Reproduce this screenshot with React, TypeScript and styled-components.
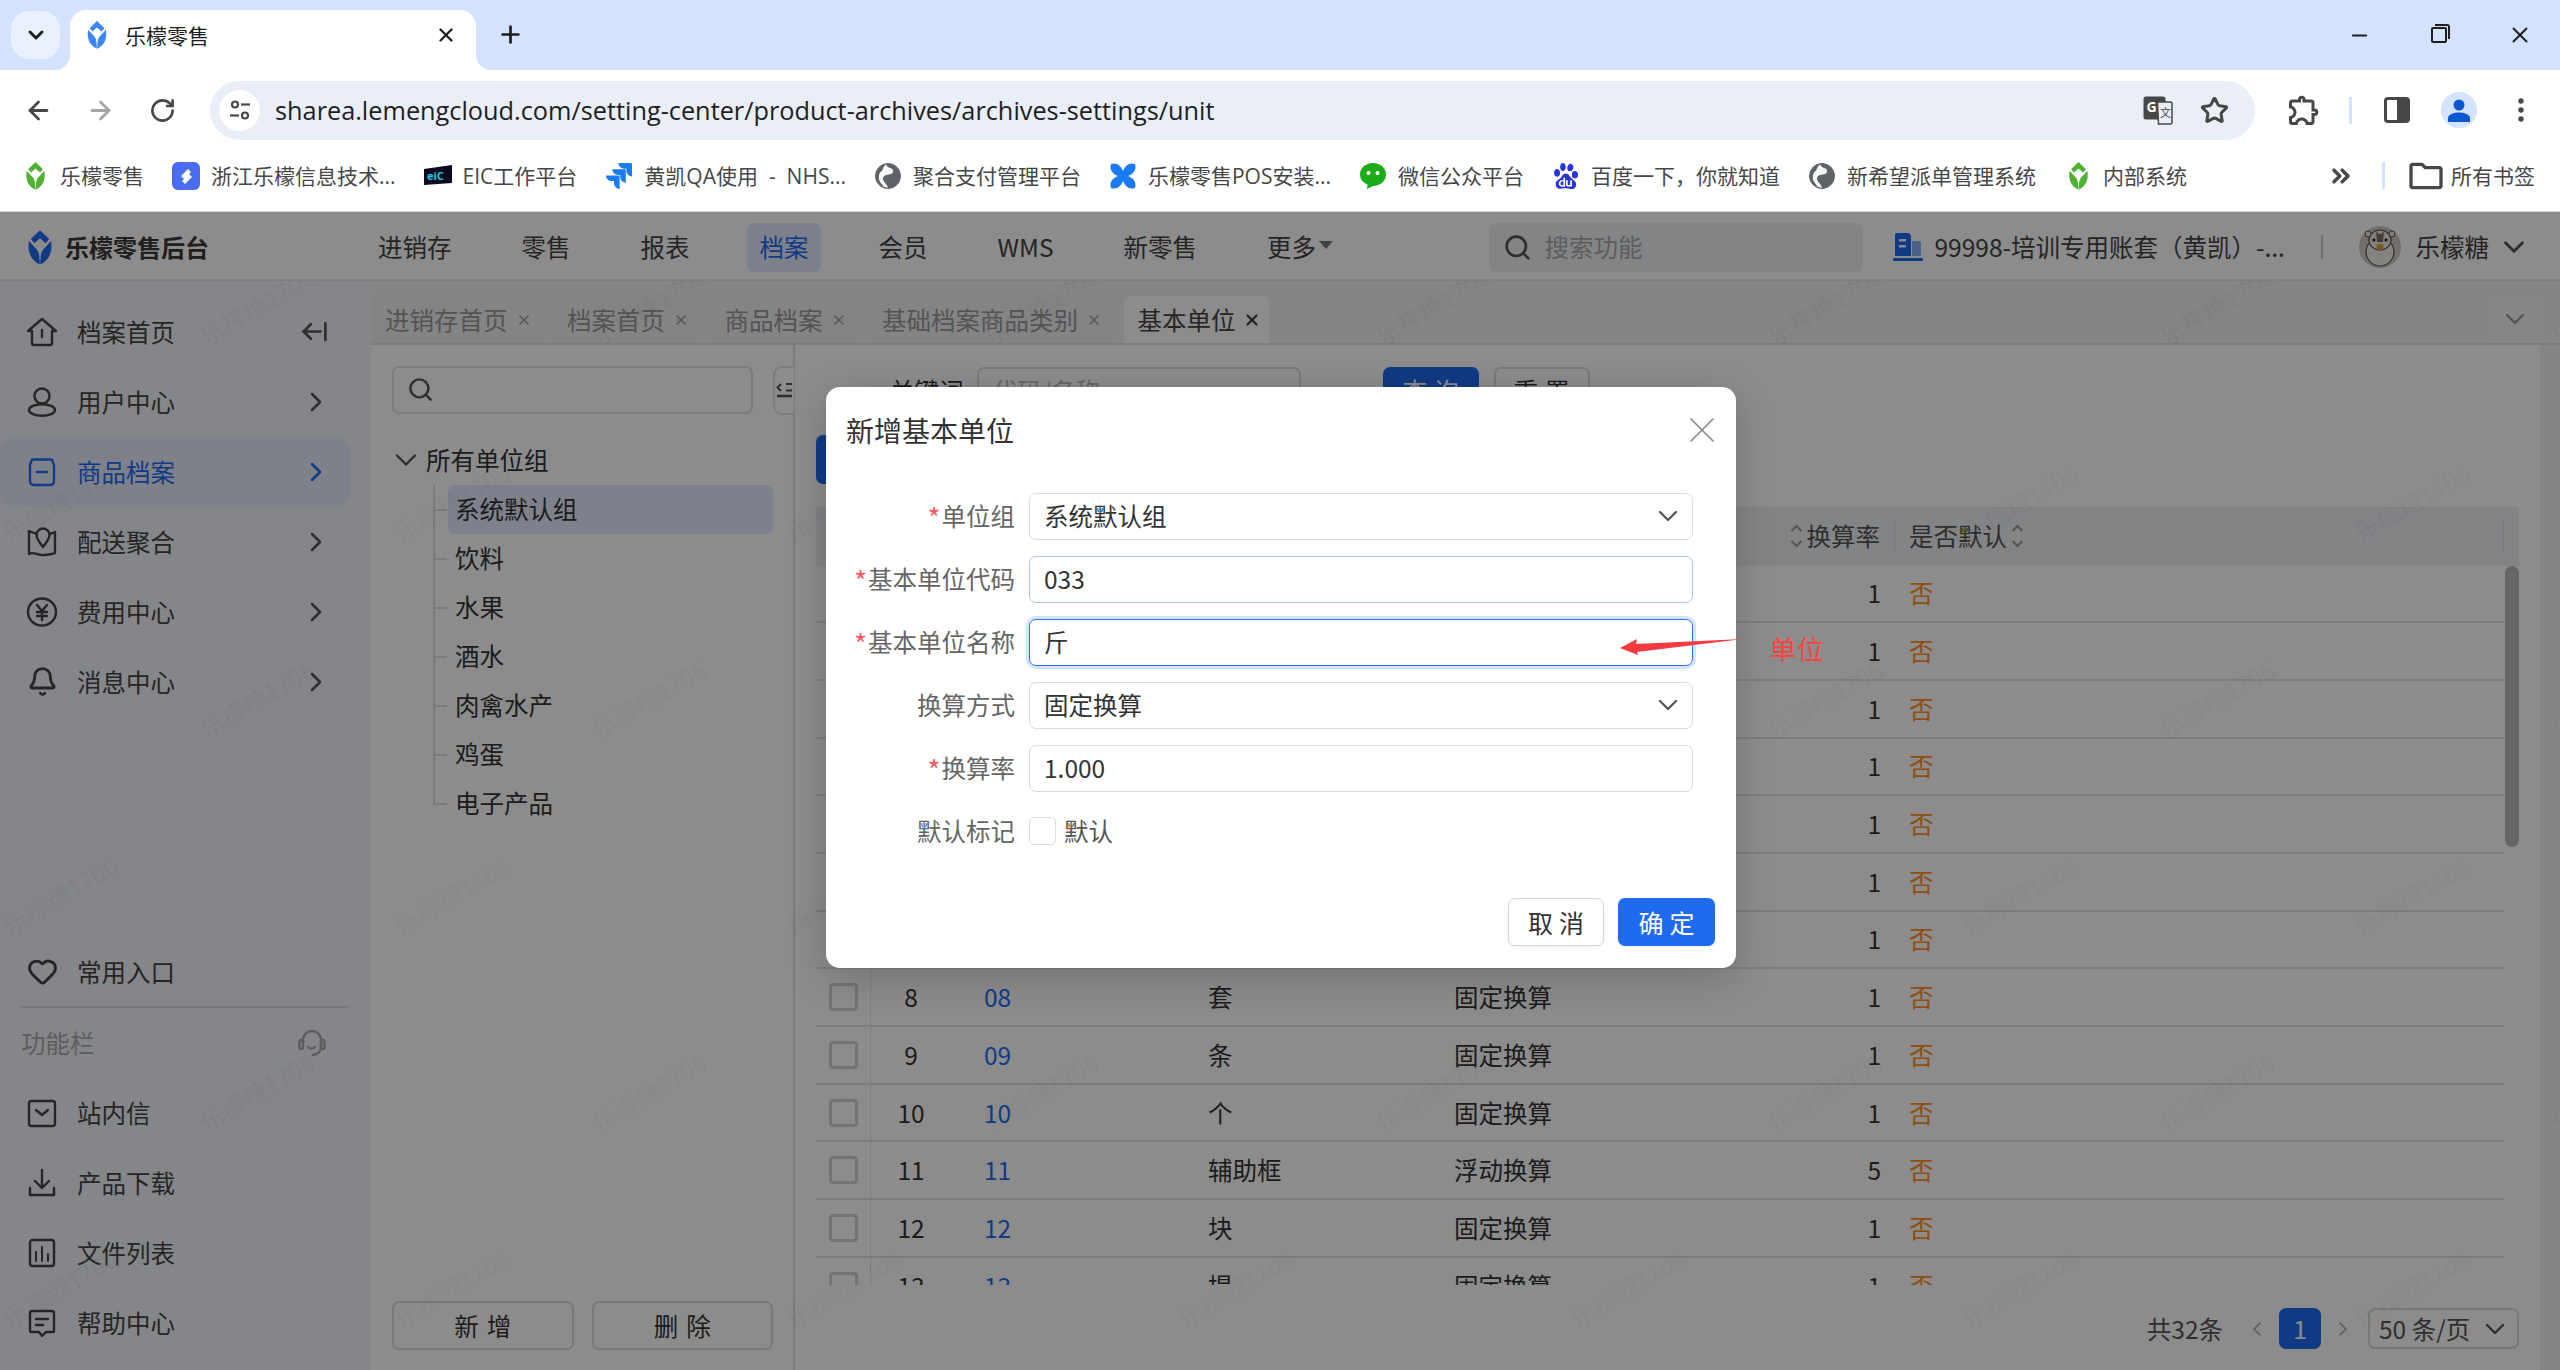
import styled, { createGlobalStyle } from 'styled-components'
import {
  ArrowLeft, ArrowLeftFromLine, ArrowRight, Bell, ChevronDown, ChevronLeft, ChevronRight, ChevronsRight,
  Heart, Minus, Plus, RotateCw, Search, Star, X,
} from 'lucide-react'
import { MdOutlineExtension, MdOutlineFolder } from 'react-icons/md'
import { SiBaidu, SiJira } from 'react-icons/si'
import type { ReactNode } from 'react'

const GlobalStyle = createGlobalStyle`
  html, body {
    margin: 0;
    padding: 0;
    overflow: hidden;
    background: #fff;
  }
  * {
    box-sizing: border-box;
  }
  body {
    font-family: "Noto Sans CJK SC", "Noto Sans", sans-serif;
    color: #333;
  }
`

const Screen = styled.div`
  width: 2560px;
  height: 1370px;
  display: flex;
  flex-direction: column;
  overflow: hidden;
`

/* ---------- browser chrome ---------- */

const TabStrip = styled.div`
  height: 70px;
  flex: none;
  display: flex;
  align-items: flex-end;
  background: #d3e3fd;
  color: #1f1f1f;
`

const TabListButton = styled.div`
  width: 49px;
  height: 48px;
  margin: 0 10px 11px 11px;
  border-radius: 18px;
  background: #e9f0fe;
  display: flex;
  align-items: center;
  justify-content: center;
`

const BrowserTab = styled.div`
  position: relative;
  width: 406px;
  height: 60px;
  padding: 0 19px 10px 16px;
  border-radius: 16px 16px 0 0;
  background: #fff;
  display: flex;
  align-items: center;
  font-size: 21px;
  line-height: 30px;

  &::before,
  &::after {
    content: '';
    position: absolute;
    bottom: 0;
    width: 16px;
    height: 16px;
  }
  &::before {
    left: -16px;
    background: radial-gradient(circle at 0 0, transparent 16px, #fff 16.5px);
  }
  &::after {
    right: -16px;
    background: radial-gradient(circle at 100% 0, transparent 16px, #fff 16.5px);
  }
`

const BrowserTabTitle = styled.span`
  margin-left: 17px;
  flex: 1;
`

const NewTab = styled.div`
  margin: 0 0 22px 21px;
  display: flex;
`

const WindowControls = styled.div`
  margin: 0 27px 22px auto;
  display: flex;
  align-items: center;
  gap: 60px;
`

const RestoreIcon = styled.span`
  position: relative;
  width: 16px;
  height: 16px;
  display: block;
  border: 2px solid #1f1f1f;
  border-radius: 2px;
  background: #d3e3fd;

  &::after {
    content: '';
    position: absolute;
    top: -5px;
    right: -5px;
    width: 13px;
    height: 13px;
    border-top: 2px solid #1f1f1f;
    border-right: 2px solid #1f1f1f;
    border-radius: 0 3px 0 0;
  }
`

const Toolbar = styled.div`
  height: 80px;
  flex: none;
  margin-top: -0.5px;
  padding: 11px 8px 0 7px;
  display: flex;
  align-items: flex-start;
  background: #fff;
  border-radius: 14px 14px 0 0;
  color: #474747;
`

const ToolButton = styled.div`
  width: 62px;
  height: 59px;
  flex: none;
  display: flex;
  align-items: center;
  justify-content: center;
`

const AddressBar = styled.div`
  flex: 1;
  height: 59px;
  margin: 0 18px 0 17px;
  padding: 0 26px 0 9px;
  display: flex;
  align-items: center;
  border-radius: 30px;
  background: #eaeef7;
`

const SiteInfo = styled.div`
  width: 41px;
  height: 41px;
  flex: none;
  border-radius: 50%;
  background: #fff;
  display: flex;
  align-items: center;
  justify-content: center;
`

const Url = styled.div`
  flex: 1;
  margin-left: 15px;
  font-family: "Open Sans", "Noto Sans", sans-serif;
  font-size: 25.3px;
  line-height: 34px;
  color: #1f1f1f;
  white-space: nowrap;
`

const AddressIcons = styled.div`
  display: flex;
  align-items: center;
  gap: 27px;
`

const ToolDivider = styled.div`
  width: 3px;
  height: 27px;
  margin: 16px 14px 0 14px;
  flex: none;
  background: #d3e3fd;
`

const ProfileBubble = styled.div`
  width: 36px;
  height: 36px;
  border-radius: 50%;
  background: #d3e3fd;
  display: flex;
  align-items: center;
  justify-content: center;
`

const Bookmarks = styled.div`
  height: 62px;
  flex: none;
  padding: 0 25px 9px 22px;
  display: flex;
  align-items: center;
  gap: 29px;
  background: #fff;
  border-bottom: 1px solid #d4d4d4;
  font-family: "Open Sans", "Noto Sans CJK SC", sans-serif;
  font-size: 21px;
  line-height: 30px;
  word-spacing: 5.5px;
  color: #474747;
`

const Bookmark = styled.div`
  display: flex;
  align-items: center;
  gap: 12px;
  white-space: nowrap;
`

const BookmarkIcon = styled.span`
  width: 26px;
  height: 28px;
  flex: none;
  display: flex;
  align-items: center;
  justify-content: center;

  svg {
    flex: none;
  }
`

const BookmarkTail = styled.div`
  margin-left: auto;
  display: flex;
  align-items: center;
`

const BookmarkDivider = styled.div`
  width: 3px;
  height: 27px;
  margin: 0 28px 0 27px;
  background: #d3e3fd;
`

/* ---------- app header ---------- */

const Page = styled.div`
  position: relative;
  flex: 1;
  min-height: 0;
  display: flex;
  flex-direction: column;
  background: #fff;
`

const AppHeader = styled.header`
  height: 69px;
  flex: none;
  padding: 4px 29px 0 0;
  display: flex;
  align-items: center;
  border-bottom: 2px solid #e6e6e6;
  background: #fff;
  font-size: 24.5px;
  line-height: 34px;
`

const Brand = styled.div`
  width: 365.5px;
  flex: none;
  padding-left: 27px;
  display: flex;
  align-items: center;
  gap: 12px;
`

const BrandName = styled.span`
  font-size: 24px;
  font-weight: 700;
  color: #3a3a3a;
`

const Nav = styled.nav`
  display: flex;
  align-items: center;
  gap: 45px;
`

const NavItem = styled.div<{ $active?: boolean }>`
  height: 49px;
  padding: 0 12.5px;
  display: flex;
  align-items: center;
  gap: 3px;
  border-radius: 7px;
  color: ${p => (p.$active ? '#1f6bf0' : '#444')};
  background: ${p => (p.$active ? '#e2eafb' : 'transparent')};
`

const Caret = styled.span`
  width: 0;
  height: 0;
  margin-top: -4px;
  border-left: 7px solid transparent;
  border-right: 7px solid transparent;
  border-top: 8px solid #777;
`

const HeaderSearch = styled.div`
  width: 374px;
  height: 49px;
  margin-left: auto;
  padding-left: 14px;
  display: flex;
  align-items: center;
  gap: 13px;
  border-radius: 7px;
  background: #eef0f5;
  color: #aaa;
`

const Account = styled.div`
  margin-left: 30px;
  display: flex;
  align-items: center;
  gap: 12px;
  color: #444;
  white-space: nowrap;
`

const AccountName = styled.span`
  width: 347px;
`

const HeaderDivider = styled.div`
  width: 2px;
  height: 24px;
  margin: 0 36px 0 39px;
  background: #ccc;
`

const UserName = styled.span`
  margin: 0 8px 0 15px;
  color: #444;
`

/* ---------- sidebar ---------- */

const Body = styled.div`
  flex: 1;
  min-height: 0;
  display: flex;
`

const Sidebar = styled.aside`
  width: 371px;
  flex: none;
  padding: 16px 22px 12px 0;
  display: flex;
  flex-direction: column;
  background: #f2f4fa;
`

const SideRow = styled.div<{ $active?: boolean; $short?: boolean }>`
  height: ${p => (p.$short ? 69 : 70)}px;
  flex: none;
  padding: 0 17px 0 26px;
  display: flex;
  align-items: center;
  border-radius: 14px;
  font-size: 24.5px;
  line-height: 34px;
  color: ${p => (p.$active ? '#1f6bf0' : '#444')};
  background: ${p => (p.$active ? '#e6ecfa' : 'transparent')};
`

const SideIcon = styled.span`
  width: 32px;
  height: 32px;
  flex: none;
  margin-right: 19px;
  display: flex;
  align-items: center;
  justify-content: center;
`

const SideLabel = styled.span`
  flex: 1;
`

const CollapseArrow = styled.span`
  margin-right: 3px;
  display: flex;
`

const SideBottom = styled.div`
  margin-top: auto;
  display: flex;
  flex-direction: column;
`

const SideDivider = styled.div`
  height: 2px;
  margin-left: 21px;
  background: #dcdde3;
`

const SideSection = styled.div`
  height: 70px;
  padding: 0 22px 0 21px;
  display: flex;
  align-items: center;
  justify-content: space-between;
  font-size: 24.5px;
  line-height: 34px;
  color: #aaa;
`

/* ---------- work area ---------- */

const Main = styled.main`
  flex: 1;
  min-width: 0;
  display: flex;
  flex-direction: column;
  background: #f2f2f5;
`

const TabsBar = styled.div`
  height: 64px;
  flex: none;
  padding-top: 15px;
  display: flex;
  align-items: stretch;
  gap: 10.5px;
  border-bottom: 2px solid #e2e2e5;
`

const PageTab = styled.div<{ $active?: boolean }>`
  padding: 2px ${p => (p.$active ? 8 : 11)}px 0 14px;
  display: flex;
  align-items: center;
  gap: ${p => (p.$active ? 7 : 8)}px;
  border-radius: 7px 7px 0 0;
  font-size: 24.5px;
  line-height: 34px;
  color: ${p => (p.$active ? '#444' : '#999')};
  background: ${p => (p.$active ? '#fff' : '#f0f0f3')};
`

const TabsMore = styled.div`
  width: 50px;
  margin: 0 20px 0 auto;
  display: flex;
  align-items: center;
  justify-content: center;
  background: #f5f5f8;
  color: #999;
`

const Content = styled.div`
  flex: 1;
  min-height: 0;
  margin-right: 20px;
  display: flex;
  background: #fff;
`

const TreePanel = styled.section`
  position: relative;
  width: 424px;
  flex: none;
  padding: 21px 20px 20px 21px;
  display: flex;
  flex-direction: column;
  border-right: 2px solid #dfdfdf;
`

const TreeSearch = styled.div`
  width: 361px;
  height: 48px;
  flex: none;
  padding-left: 13px;
  display: flex;
  align-items: center;
  border: 2px solid #e2e2e2;
  border-radius: 7px;
`

const CollapseTab = styled.div`
  position: absolute;
  top: 21px;
  right: -1px;
  width: 21px;
  height: 49px;
  display: flex;
  align-items: center;
  justify-content: center;
  border: 2px solid #e2e2e2;
  border-right: 0;
  border-radius: 9px 0 0 9px;
  background: #fff;
`

const TreeRoot = styled.div`
  height: 49px;
  margin: 22px 0 0 -4px;
  flex: none;
  display: flex;
  align-items: center;
  gap: 2px;
  font-size: 24.5px;
  line-height: 34px;
  color: #333;
`

const TreeChildren = styled.div`
  padding-left: 56px;
  display: flex;
  flex-direction: column;
`

const TreeNode = styled.div<{ $selected?: boolean; $last?: boolean }>`
  position: relative;
  height: 49px;
  padding-left: 7px;
  display: flex;
  align-items: center;
  border-radius: 7px;
  font-size: 24.5px;
  line-height: 34px;
  color: #333;
  background: ${p => (p.$selected ? '#e5ecff' : 'transparent')};

  &::before {
    content: '';
    position: absolute;
    left: -15px;
    top: 0;
    height: ${p => (p.$last ? '50%' : '100%')};
    border-left: 2px solid #e0e0e0;
  }
  &::after {
    content: '';
    position: absolute;
    left: -15px;
    top: 50%;
    width: 14px;
    border-top: 2px solid #e0e0e0;
  }
`

const TreeActions = styled.div`
  margin-top: auto;
  display: flex;
  gap: 18px;
`

const OutlineButton = styled.div`
  width: 182px;
  height: 49px;
  display: flex;
  align-items: center;
  justify-content: center;
  border: 2px solid #dcdcdc;
  border-radius: 7px;
  background: #fff;
  font-size: 24.5px;
  line-height: 34px;
  letter-spacing: 8px;
  text-indent: 8px;
  color: #333;
`

const ListPanel = styled.section`
  flex: 1;
  min-width: 0;
  padding: 22px 21px 21px 21px;
  display: flex;
  flex-direction: column;
`

const QueryRow = styled.div`
  height: 48px;
  flex: none;
  padding-left: 74px;
  display: flex;
  align-items: center;
  font-size: 24.5px;
  line-height: 34px;
`

const QueryInput = styled.div`
  width: 324px;
  height: 48px;
  margin: 0 82px 0 13px;
  padding-left: 14px;
  display: flex;
  align-items: center;
  border: 2px solid #dedede;
  border-radius: 7px;
  color: #bbb;
`

const QueryButton = styled.div<{ $primary?: boolean }>`
  width: 96px;
  height: 48px;
  margin-right: 15px;
  display: flex;
  align-items: center;
  justify-content: center;
  border-radius: 7px;
  letter-spacing: 7px;
  text-indent: 7px;
  color: ${p => (p.$primary ? '#fff' : '#333')};
  background: ${p => (p.$primary ? '#1f6bf0' : '#fff')};
  border: ${p => (p.$primary ? '0' : '2px solid #dcdcdc')};
`

const ActionRow = styled.div`
  height: 49px;
  margin: 20px 0 23px;
  flex: none;
  display: flex;
`

const PrimaryButton = styled.div`
  width: 96px;
  height: 49px;
  display: flex;
  align-items: center;
  justify-content: center;
  border-radius: 7px;
  background: #1f6bf0;
  color: #fff;
  font-size: 24.5px;
  line-height: 34px;
  letter-spacing: 7px;
  text-indent: 7px;
`

const TableWrap = styled.div`
  position: relative;
  flex: 1;
  min-height: 0;
  display: flex;
  flex-direction: column;
`

const columns = '55px 80px 245px 246px 260px 193px 1fr'

const TableHead = styled.div`
  height: 59px;
  flex: none;
  display: grid;
  grid-template-columns: ${columns} 15px;
  align-items: center;
  background: #eef0f5;
  font-size: 24.5px;
  line-height: 34px;
  color: #555;
`

const HeadCell = styled.div<{ $align?: string; $divide?: boolean }>`
  height: 33px;
  padding: 0 14px;
  display: flex;
  align-items: center;
  justify-content: ${p => p.$align || 'flex-start'};
  gap: 4px;
  border-right: ${p => (p.$divide ? '1px solid #dcdee4' : '0')};
`

const TableBody = styled.div`
  flex: 1;
  min-height: 0;
  padding-right: 15px;
  overflow: hidden;
`

const TableRow = styled.div`
  height: 57.7px;
  display: grid;
  grid-template-columns: ${columns};
  align-items: center;
  border-bottom: 2px solid #e3e3e3;
  font-size: 24.5px;
  line-height: 34px;
  color: #333;
`

const CheckCell = styled.div`
  height: 100%;
  display: flex;
  align-items: center;
  padding-left: 13px;
  border-right: 1px solid #e6e6e6;
`

const RowCheck = styled.span`
  width: 29px;
  height: 28px;
  border: 3px solid #d4d4d4;
  border-radius: 4px;
  background: #fff;
`

const IndexCell = styled.div`
  text-align: center;
`

const CodeCell = styled.div`
  padding-left: 33px;
  color: #1f6bf0;
`

const TextCell = styled.div`
  padding-left: 12px;
  white-space: nowrap;
`

const RateCell = styled.div`
  padding-right: 14px;
  text-align: right;
`

const FlagCell = styled.div`
  padding-left: 14px;
  color: #ff8f1f;
`

const Scrollbar = styled.div`
  position: absolute;
  top: 59px;
  right: 0;
  width: 14px;
  height: 281px;
  border-radius: 7px;
  background: #bbb;
`

const Pager = styled.div`
  height: 41px;
  margin-top: 23px;
  flex: none;
  display: flex;
  align-items: center;
  justify-content: flex-end;
  font-size: 24.5px;
  line-height: 34px;
  color: #555;
`

const PagerTotal = styled.span`
  margin-right: 22px;
`

const PagerArrow = styled.span`
  width: 24px;
  display: flex;
  justify-content: center;
  color: #aaa;
`

const PagerCurrent = styled.div`
  width: 42px;
  height: 41px;
  margin: 0 10px;
  display: flex;
  align-items: center;
  justify-content: center;
  border-radius: 7px;
  background: #1f6bf0;
  color: #fff;
`

const PagerSize = styled.div`
  width: 151px;
  height: 41px;
  margin-left: 13px;
  padding: 0 6px 0 9px;
  display: flex;
  align-items: center;
  justify-content: space-between;
  border: 2px solid #d9d9d9;
  border-radius: 7px;
  white-space: nowrap;
`

/* ---------- overlays ---------- */

const WatermarkLayer = styled.div`
  position: absolute;
  inset: 69px 0 0 0;
  overflow: hidden;
  pointer-events: none;
`

const WatermarkText = styled.span`
  position: absolute;
  transform: translate(-50%, -50%) rotate(-30deg);
  font-size: 24.5px;
  line-height: 34px;
  white-space: nowrap;
  color: rgba(0, 0, 0, 0.05);
`

const Mask = styled.div`
  position: absolute;
  inset: 0;
  background: rgba(0, 0, 0, 0.45);
`

const Dialog = styled.div`
  position: absolute;
  left: 826px;
  top: 175px;
  width: 910px;
  height: 581px;
  display: flex;
  flex-direction: column;
  border-radius: 14px;
  background: #fff;
  box-shadow: 0 10px 40px rgba(0, 0, 0, 0.18);
`

const DialogHeader = styled.div`
  height: 86px;
  flex: none;
  padding: 0 12px 0 20px;
  display: flex;
  align-items: center;
  justify-content: space-between;
  font-size: 28px;
  line-height: 40px;
  color: #333;
`

const Form = styled.div`
  margin-top: 20px;
  padding-right: 43px;
  display: grid;
  grid-template-columns: 189px 1fr;
  grid-auto-rows: 47px;
  column-gap: 14px;
  row-gap: 16px;
  align-items: center;
  font-size: 24.5px;
  line-height: 34px;
`

const FieldLabel = styled.div`
  text-align: right;
  color: #666;
  white-space: nowrap;
`

const Required = styled.span`
  margin-right: 1px;
  font-size: 28px;
  line-height: 24px;
  vertical-align: -3px;
  color: #ff5a5f;
`

const Field = styled.div<{ $state?: 'hover' | 'focus' }>`
  height: 47px;
  padding: 0 8px 0 14px;
  display: flex;
  align-items: center;
  justify-content: space-between;
  border-radius: 7px;
  color: #333;
  border: ${p => (p.$state === 'focus' ? '1.5px solid #2a72f0' : p.$state === 'hover' ? '1.5px solid #a9c6f5' : '1.5px solid #dcdcdc')};
  box-shadow: ${p => (p.$state === 'focus' ? '0 0 0 3px #d5e3fc' : 'none')};
`

const CheckField = styled.div`
  display: flex;
  align-items: center;
  gap: 8px;
  color: #555;
`

const CheckBox = styled.span`
  width: 27px;
  height: 28px;
  border: 1.5px solid #dcdcdc;
  border-radius: 5px;
`

const DialogFooter = styled.div`
  margin-top: auto;
  padding: 0 21px 22px 0;
  display: flex;
  justify-content: flex-end;
  gap: 14px;
`

const DialogButton = styled.div<{ $primary?: boolean }>`
  width: ${p => (p.$primary ? 97 : 96)}px;
  height: 48px;
  display: flex;
  align-items: center;
  justify-content: center;
  border-radius: 7px;
  font-size: 25px;
  line-height: 34px;
  letter-spacing: 6px;
  text-indent: 6px;
  color: ${p => (p.$primary ? '#fff' : '#333')};
  background: ${p => (p.$primary ? '#1f6bf0' : '#fff')};
  border: ${p => (p.$primary ? '0' : '1.5px solid #d5d5d5')};
  box-shadow: 0 2px 3px rgba(0, 0, 0, 0.05);
`

const ArrowMark = styled.svg`
  position: absolute;
  left: 1615px;
  top: 420px;
`

const MarkLabel = styled.div`
  position: absolute;
  left: 1769px;
  top: 416px;
  font-size: 27.5px;
  line-height: 40px;
  color: #ff4242;
`

/* ---------- drawings ---------- */

const LemonLogo = ({ color, w = 24, h = 32 }: { color: string; w?: number; h?: number }) => (
  <svg width={w} height={h} viewBox="0 0 24 32" fill={color}>
    <path d="M12 0 L20.5 8.2 L17.2 12 L12 7.4 L6.8 12 L3.5 8.2 Z" />
    <path d="M1.8 10 L9 17.8 C11.2 20.5 11.6 24 11.8 31.6 C5 28.6 0 22 1.8 10 Z" />
    <path d="M22.2 10 L15 17.8 C12.8 20.5 12.4 24 12.2 31.6 C19 28.6 24 22 22.2 10 Z" />
  </svg>
)

const SiteTuneIcon = () => (
  <svg width="24" height="24" viewBox="0 0 24 24" fill="none" stroke="#474747" strokeWidth="2.2">
    <circle cx="7" cy="6.5" r="3" />
    <path d="M13 6.5 H22" />
    <circle cx="17" cy="17.5" r="3" />
    <path d="M2 17.5 H11" />
  </svg>
)

const TranslateIcon = () => (
  <svg width="30" height="29" viewBox="0 0 30 29">
    <rect x="0.5" y="0.5" width="22" height="23" rx="2.5" fill="#474747" />
    <text x="3.5" y="16" fontSize="14" fontWeight="700" fontFamily="Open Sans, sans-serif" fill="#fff">G</text>
    <path d="M14.5 6 H27.5 A1.5 1.5 0 0 1 29 7.5 V26.5 A1.5 1.5 0 0 1 27.5 28 H15.5 Z" fill="#eaeef7" stroke="#474747" strokeWidth="1.5" />
    <text x="17" y="21" fontSize="11" fontFamily="Noto Sans CJK SC, sans-serif" fill="#474747">文</text>
  </svg>
)

const SidePanelIcon = () => (
  <svg width="26" height="26" viewBox="0 0 26 26">
    <rect x="1.5" y="1.5" width="23" height="23" rx="2.5" fill="none" stroke="#474747" strokeWidth="3" />
    <rect x="13" y="2" width="11" height="22" fill="#474747" />
  </svg>
)

const ProfileIcon = () => (
  <svg width="26" height="26" viewBox="0 0 26 26" fill="#0b57d0">
    <circle cx="13" cy="8" r="5.5" />
    <path d="M2 25 V21 C2 17.5 8 15.5 13 15.5 C18 15.5 24 17.5 24 21 V25 Z" />
  </svg>
)

const KebabIcon = () => (
  <svg width="8" height="26" viewBox="0 0 8 26" fill="#474747">
    <circle cx="4" cy="4" r="2.7" />
    <circle cx="4" cy="13" r="2.7" />
    <circle cx="4" cy="22" r="2.7" />
  </svg>
)

const TeamIcon = () => (
  <svg width="28" height="28" viewBox="0 0 28 28">
    <rect width="28" height="28" rx="6" fill="#4a6cf0" />
    <path d="M9 14 L16 7 L19 10 L12 17 Z M10 19 L17 12 L20 15 L13 22 Z" fill="#fff" />
  </svg>
)

const EicIcon = () => (
  <svg width="28" height="24" viewBox="0 0 28 24">
    <path d="M0 5 L28 1 V19 L0 21 Z" fill="#0a0a1e" />
    <text x="3" y="16" fontSize="11" fontWeight="700" fontFamily="Open Sans, sans-serif" fill="#27c4e8">eiC</text>
  </svg>
)

const GlobeIcon = () => (
  <svg width="26" height="26" viewBox="0 0 26 26">
    <circle cx="13" cy="13" r="12.5" fill="#5f6368" />
    <path d="M11 1 C12 6 19 4 18 9 C17 13 9 10 8 15 C7.5 19 12 20 13 25 L9 24 C6 20 3 18 4 12 C5 8 8 8 8 5 Z" fill="#fff" opacity="0.95" />
    <circle cx="13" cy="13" r="12.5" fill="none" stroke="#5f6368" strokeWidth="1" />
  </svg>
)

const ButterflyIcon = () => (
  <svg width="28" height="28" viewBox="0 0 28 28" fill="#1a7bf2">
    <path d="M2 2 C8 0 12 4 14 9 C16 4 20 0 26 2 C28 8 24 12 19 14 C24 16 28 20 26 26 C20 28 16 24 14 19 C12 24 8 28 2 26 C0 20 4 16 9 14 C4 12 0 8 2 2 Z" />
  </svg>
)

const WechatIcon = () => (
  <svg width="28" height="28" viewBox="0 0 28 28">
    <path d="M14 1 C21.5 1 27 6 27 12.5 C27 19 21.5 24 14 24 L8 27 L8.5 22.5 C4 20.5 1 17 1 12.5 C1 6 6.5 1 14 1 Z" fill="#1aad19" />
    <circle cx="9.5" cy="11" r="2" fill="#fff" />
    <circle cx="18.5" cy="11" r="2" fill="#fff" />
  </svg>
)

const BuildingIcon = () => (
  <svg width="30" height="28" viewBox="0 0 30 28">
    <path d="M2 2 Q2 0 4 0 H14 Q18 0 18 4 V23 H2 Z" fill="#1f6bf0" />
    <rect x="6" y="6" width="7" height="2.5" fill="#fff" />
    <rect x="6" y="12" width="7" height="2.5" fill="#fff" />
    <path d="M19 8 H26 Q28 8 28 10 V23 H19 Z" fill="#8aaef2" />
    <rect x="0" y="25" width="30" height="3" rx="1" fill="#1f6bf0" />
  </svg>
)

const HamsterAvatar = () => (
  <svg width="42" height="42" viewBox="0 0 42 42">
    <circle cx="21" cy="21" r="21" fill="#cfc9c4" />
    <ellipse cx="21" cy="26" rx="14" ry="14" fill="#f3efe9" stroke="#555" strokeWidth="1.2" />
    <ellipse cx="21" cy="14" rx="11" ry="10" fill="#efe9e2" stroke="#555" strokeWidth="1.2" />
    <path d="M17 5 C19 9 23 9 25 5 L24 16 H18 Z" fill="#7d6f62" />
    <circle cx="9" cy="8" r="3" fill="#efe9e2" stroke="#555" />
    <circle cx="33" cy="8" r="3" fill="#efe9e2" stroke="#555" />
    <circle cx="15" cy="14" r="1.6" fill="#222" />
    <circle cx="27" cy="14" r="1.6" fill="#222" />
    <rect x="17.5" y="18" width="7" height="6" rx="2" fill="#d9a441" />
  </svg>
)

const navIconProps = {
  width: 32,
  height: 30,
  viewBox: '0 0 32 30',
  fill: 'none',
  stroke: 'currentColor',
  strokeWidth: 2.4,
  strokeLinejoin: 'round' as const,
  strokeLinecap: 'round' as const,
}

const HomeIcon = () => (
  <svg {...navIconProps}>
    <path d="M16 2 L30 14 H26 V26 Q26 28 24 28 H8 Q6 28 6 26 V14 H2 Z" />
    <path d="M16 13 V20" />
  </svg>
)

const UserIcon = () => (
  <svg {...navIconProps}>
    <ellipse cx="16" cy="9" rx="7.5" ry="7.5" />
    <ellipse cx="16" cy="23" rx="13" ry="5.8" />
  </svg>
)

const ArchiveIcon = () => (
  <svg {...navIconProps}>
    <path d="M6 2.5 H26 L28 8 V24 Q28 28 24 28 H8 Q4 28 4 24 V8 Z" />
    <path d="M11 15 H21" />
  </svg>
)

const MapIcon = () => (
  <svg {...navIconProps}>
    <path d="M11 7 L3 4 V27 C8 24 12 29 18 28 C22 27 26 28 29 26 V5 L24 7" />
    <path d="M17 20 C13 15 10.5 12 10.5 8 A6.5 6.5 0 0 1 23.5 8 C23.5 12 21 15 17 20 Z" />
  </svg>
)

const YenIcon = () => (
  <svg {...navIconProps}>
    <ellipse cx="16" cy="15" rx="14" ry="13.5" />
    <path d="M11 8 L16 14 L21 8 M11 15 H21 M11 19 H21 M16 14 V23" />
  </svg>
)

const InboxIcon = () => (
  <svg {...navIconProps}>
    <rect x="3" y="3" width="26" height="25" rx="2.5" />
    <path d="M10 12 L16 17 L22 12" />
  </svg>
)

const DownloadIcon = () => (
  <svg {...navIconProps}>
    <path d="M16 2 V20 M9 13 L16 20 L23 13 M4 20 V27 H28 V20" />
  </svg>
)

const ReportIcon = () => (
  <svg {...navIconProps}>
    <rect x="4" y="2" width="24" height="26" rx="2.5" />
    <path d="M10 14 V23 M16 9 V23 M22 16 V23" strokeWidth="2" />
  </svg>
)

const HelpIcon = () => (
  <svg {...navIconProps}>
    <path d="M4 5 Q4 3 6 3 H26 Q28 3 28 5 V23 Q28 24 26 24 H20 L16 28 L13 24 H6 Q4 24 4 23 Z" />
    <path d="M10 11 H22 M10 17 H17" />
  </svg>
)

const HeadsetIcon = () => (
  <svg width="30" height="30" viewBox="0 0 30 30" fill="none" stroke="#aaa" strokeWidth="2.4" strokeLinecap="round">
    <path d="M6 14 V12 A9 9 0 0 1 24 12 V19 C24 23 21 26 16 27" />
    <rect x="2.5" y="12" width="3.5" height="9" rx="1.5" />
    <rect x="24" y="12" width="3.5" height="9" rx="1.5" />
    <path d="M11 19 C13 21 16 21 18 19" />
  </svg>
)

const ListCollapseIcon = () => (
  <svg width="18" height="18" viewBox="0 0 18 18" fill="none" stroke="#555" strokeWidth="2">
    <path d="M5 3 L1.5 6.5 L5 10" />
    <path d="M10 3 H16 M10 9.5 H16" />
    <path d="M1 15 H16" strokeWidth="2.6" />
  </svg>
)

const SortIcon = () => (
  <svg width="13" height="24" viewBox="0 0 13 24" fill="none" stroke="#999" strokeWidth="2">
    <path d="M1.5 7 L6.5 2 L11.5 7 M1.5 17 L6.5 22 L11.5 17" />
  </svg>
)

/* ---------- data ---------- */

const bookmarks: { icon: ReactNode; label: string }[] = [
  { icon: <LemonLogo color="#4fb233" w={21} h={28} />, label: '乐檬零售' },
  { icon: <TeamIcon />, label: '浙江乐檬信息技术...' },
  { icon: <EicIcon />, label: 'EIC工作平台' },
  { icon: <SiJira size={26} color="#1a7bf2" />, label: '黄凯QA使用 - NHS...' },
  { icon: <GlobeIcon />, label: '聚合支付管理平台' },
  { icon: <ButterflyIcon />, label: '乐檬零售POS安装...' },
  { icon: <WechatIcon />, label: '微信公众平台' },
  { icon: <SiBaidu size={26} color="#2932e1" />, label: '百度一下，你就知道' },
  { icon: <GlobeIcon />, label: '新希望派单管理系统' },
  { icon: <LemonLogo color="#4fb233" w={21} h={28} />, label: '内部系统' },
]

const navItems = ['进销存', '零售', '报表', '档案', '会员', 'WMS', '新零售']

const sideMain: { icon: ReactNode; label: string }[] = [
  { icon: <UserIcon />, label: '用户中心' },
  { icon: <ArchiveIcon />, label: '商品档案' },
  { icon: <MapIcon />, label: '配送聚合' },
  { icon: <YenIcon />, label: '费用中心' },
  { icon: <Bell size={31} strokeWidth={2.2} />, label: '消息中心' },
]

const sideTools: { icon: ReactNode; label: string }[] = [
  { icon: <InboxIcon />, label: '站内信' },
  { icon: <DownloadIcon />, label: '产品下载' },
  { icon: <ReportIcon />, label: '文件列表' },
  { icon: <HelpIcon />, label: '帮助中心' },
]

const pageTabs = ['进销存首页', '档案首页', '商品档案', '基础档案商品类别', '基本单位']

const treeNodes = ['系统默认组', '饮料', '水果', '酒水', '肉禽水产', '鸡蛋', '电子产品']

const rows = [
  ['1', '01', '件', '固定换算', '1'],
  ['2', '02', '箱', '固定换算', '1'],
  ['3', '03', '瓶', '固定换算', '1'],
  ['4', '04', '包', '固定换算', '1'],
  ['5', '05', '袋', '固定换算', '1'],
  ['6', '06', '盒', '固定换算', '1'],
  ['7', '07', '只', '固定换算', '1'],
  ['8', '08', '套', '固定换算', '1'],
  ['9', '09', '条', '固定换算', '1'],
  ['10', '10', '个', '固定换算', '1'],
  ['11', '11', '辅助框', '浮动换算', '5'],
  ['12', '12', '块', '固定换算', '1'],
  ['13', '13', '提', '固定换算', '1'],
]

// staggered like the site's tiled watermark
const watermarks = Array.from({ length: 6 }, (_, row) =>
  Array.from({ length: 7 }, (_, col) => ({
    x: (row % 2 === 0 ? 257 : 60) + col * 392,
    y: 306 + row * 196.5 - 281,
  })),
).flat()

const App = () => {
  return (
    <Screen>
      <GlobalStyle />

      <TabStrip>
        <TabListButton>
          <ChevronDown size={24} strokeWidth={3} />
        </TabListButton>
        <BrowserTab>
          <LemonLogo color="#3b86f6" w={22} h={28} />
          <BrowserTabTitle>乐檬零售</BrowserTabTitle>
          <X size={22} strokeWidth={2.6} />
        </BrowserTab>
        <NewTab>
          <Plus size={27} strokeWidth={2.4} />
        </NewTab>
        <WindowControls>
          <Minus size={23} strokeWidth={2} />
          <RestoreIcon />
          <X size={26} strokeWidth={1.8} />
        </WindowControls>
      </TabStrip>

      <Toolbar>
        <ToolButton><ArrowLeft size={29} strokeWidth={2.3} /></ToolButton>
        <ToolButton><ArrowRight size={29} strokeWidth={2.3} color="#a5a5a5" /></ToolButton>
        <ToolButton><RotateCw size={27} strokeWidth={2.3} /></ToolButton>
        <AddressBar>
          <SiteInfo><SiteTuneIcon /></SiteInfo>
          <Url>sharea.lemengcloud.com/setting-center/product-archives/archives-settings/unit</Url>
          <AddressIcons>
            <TranslateIcon />
            <Star size={29} strokeWidth={2.5} />
          </AddressIcons>
        </AddressBar>
        <ToolButton><MdOutlineExtension size={36} /></ToolButton>
        <ToolDivider />
        <ToolButton><SidePanelIcon /></ToolButton>
        <ToolButton><ProfileBubble><ProfileIcon /></ProfileBubble></ToolButton>
        <ToolButton><KebabIcon /></ToolButton>
      </Toolbar>

      <Bookmarks>
        {bookmarks.map(b => (
          <Bookmark key={b.label}>
            <BookmarkIcon>{b.icon}</BookmarkIcon>
            {b.label}
          </Bookmark>
        ))}
        <BookmarkTail>
          <ChevronsRight size={28} strokeWidth={3} />
          <BookmarkDivider />
          <Bookmark>
            <BookmarkIcon><MdOutlineFolder size={40} /></BookmarkIcon>
            所有书签
          </Bookmark>
        </BookmarkTail>
      </Bookmarks>

      <Page>
        <AppHeader>
          <Brand>
            <LemonLogo color="#1f6bf0" w={26} h={35} />
            <BrandName>乐檬零售后台</BrandName>
          </Brand>
          <Nav>
            {navItems.map(item => (
              <NavItem key={item} $active={item === '档案'}>{item}</NavItem>
            ))}
            <NavItem>更多<Caret /></NavItem>
          </Nav>
          <HeaderSearch>
            <Search size={29} strokeWidth={2.2} color="#555" />
            搜索功能
          </HeaderSearch>
          <Account>
            <BuildingIcon />
            <AccountName>99998-培训专用账套（黄凯）-...</AccountName>
          </Account>
          <HeaderDivider />
          <HamsterAvatar />
          <UserName>乐檬糖</UserName>
          <ChevronDown size={34} strokeWidth={2} color="#555" />
        </AppHeader>

        <Body>
          <Sidebar>
            <SideRow>
              <SideIcon><HomeIcon /></SideIcon>
              <SideLabel>档案首页</SideLabel>
              <CollapseArrow><ArrowLeftFromLine size={29} strokeWidth={2.2} color="#555" /></CollapseArrow>
            </SideRow>
            {sideMain.map(item => {
              const active = item.label === '商品档案'
              return (
                <SideRow key={item.label} $active={active}>
                  <SideIcon>{item.icon}</SideIcon>
                  <SideLabel>{item.label}</SideLabel>
                  <ChevronRight size={32} strokeWidth={1.9} color={active ? '#1f6bf0' : '#555'} />
                </SideRow>
              )
            })}
            <SideBottom>
              <SideRow $short>
                <SideIcon><Heart size={31} strokeWidth={2.2} /></SideIcon>
                <SideLabel>常用入口</SideLabel>
              </SideRow>
              <SideDivider />
              <SideSection>
                功能栏
                <HeadsetIcon />
              </SideSection>
              {sideTools.map(item => (
                <SideRow key={item.label}>
                  <SideIcon>{item.icon}</SideIcon>
                  <SideLabel>{item.label}</SideLabel>
                </SideRow>
              ))}
            </SideBottom>
          </Sidebar>

          <Main>
            <TabsBar>
              {pageTabs.map(tab => {
                const active = tab === '基本单位'
                return (
                  <PageTab key={tab} $active={active}>
                    {tab}
                    <X size={active ? 18 : 16} strokeWidth={active ? 3 : 2.2} />
                  </PageTab>
                )
              })}
              <TabsMore><ChevronDown size={32} strokeWidth={1.8} /></TabsMore>
            </TabsBar>

            <Content>
              <TreePanel>
                <TreeSearch><Search size={27} strokeWidth={2.2} color="#555" /></TreeSearch>
                <CollapseTab><ListCollapseIcon /></CollapseTab>
                <TreeRoot>
                  <ChevronDown size={36} strokeWidth={1.6} color="#555" />
                  所有单位组
                </TreeRoot>
                <TreeChildren>
                  {treeNodes.map((node, i) => (
                    <TreeNode key={node} $selected={i === 0} $last={i === treeNodes.length - 1}>{node}</TreeNode>
                  ))}
                </TreeChildren>
                <TreeActions>
                  <OutlineButton>新增</OutlineButton>
                  <OutlineButton>删除</OutlineButton>
                </TreeActions>
              </TreePanel>

              <ListPanel>
                <QueryRow>
                  关键词
                  <QueryInput>代码/名称</QueryInput>
                  <QueryButton $primary>查询</QueryButton>
                  <QueryButton>重置</QueryButton>
                </QueryRow>
                <ActionRow>
                  <PrimaryButton>新增</PrimaryButton>
                </ActionRow>
                <TableWrap>
                  <TableHead>
                    <span />
                    <HeadCell $align="center">序号</HeadCell>
                    <HeadCell>基本单位代码</HeadCell>
                    <HeadCell>基本单位名称</HeadCell>
                    <HeadCell>换算方式</HeadCell>
                    <HeadCell $align="flex-end" $divide><SortIcon />换算率</HeadCell>
                    <HeadCell $divide>是否默认<SortIcon /></HeadCell>
                  </TableHead>
                  <TableBody>
                    {rows.map(r => (
                      <TableRow key={r[0]}>
                        <CheckCell><RowCheck /></CheckCell>
                        <IndexCell>{r[0]}</IndexCell>
                        <CodeCell>{r[1]}</CodeCell>
                        <TextCell>{r[2]}</TextCell>
                        <TextCell>{r[3]}</TextCell>
                        <RateCell>{r[4]}</RateCell>
                        <FlagCell>否</FlagCell>
                      </TableRow>
                    ))}
                  </TableBody>
                  <Scrollbar />
                </TableWrap>
                <Pager>
                  <PagerTotal>共32条</PagerTotal>
                  <PagerArrow><ChevronLeft size={32} strokeWidth={1.6} /></PagerArrow>
                  <PagerCurrent>1</PagerCurrent>
                  <PagerArrow><ChevronRight size={32} strokeWidth={1.6} /></PagerArrow>
                  <PagerSize>
                    50 条/页
                    <ChevronDown size={32} strokeWidth={1.8} />
                  </PagerSize>
                </Pager>
              </ListPanel>
            </Content>
          </Main>
        </Body>

        <WatermarkLayer>
          {watermarks.map(m => (
            <WatermarkText key={`${m.x}-${m.y}`} style={{ left: m.x, top: m.y }}>乐檬糖1706</WatermarkText>
          ))}
        </WatermarkLayer>
        <Mask />

        <Dialog>
          <DialogHeader>
            新增基本单位
            <X size={44} strokeWidth={0.9} color="#888" />
          </DialogHeader>
          <Form>
            <FieldLabel><Required>*</Required>单位组</FieldLabel>
            <Field>
              系统默认组
              <ChevronDown size={32} strokeWidth={1.7} color="#555" />
            </Field>
            <FieldLabel><Required>*</Required>基本单位代码</FieldLabel>
            <Field $state="hover">033</Field>
            <FieldLabel><Required>*</Required>基本单位名称</FieldLabel>
            <Field $state="focus">斤</Field>
            <FieldLabel>换算方式</FieldLabel>
            <Field>
              固定换算
              <ChevronDown size={32} strokeWidth={1.7} color="#555" />
            </Field>
            <FieldLabel><Required>*</Required>换算率</FieldLabel>
            <Field>1.000</Field>
            <FieldLabel>默认标记</FieldLabel>
            <CheckField>
              <CheckBox />
              默认
            </CheckField>
          </Form>
          <DialogFooter>
            <DialogButton>取消</DialogButton>
            <DialogButton $primary>确定</DialogButton>
          </DialogFooter>
        </Dialog>

        <ArrowMark width="132" height="24" viewBox="0 0 132 24">
          <path d="M5 16 L22 7 L21 12 L128 7 L22 20 L23 23 Z" fill="#f23a3f" />
        </ArrowMark>
        <MarkLabel>单位</MarkLabel>
      </Page>
    </Screen>
  )
}

export default App
